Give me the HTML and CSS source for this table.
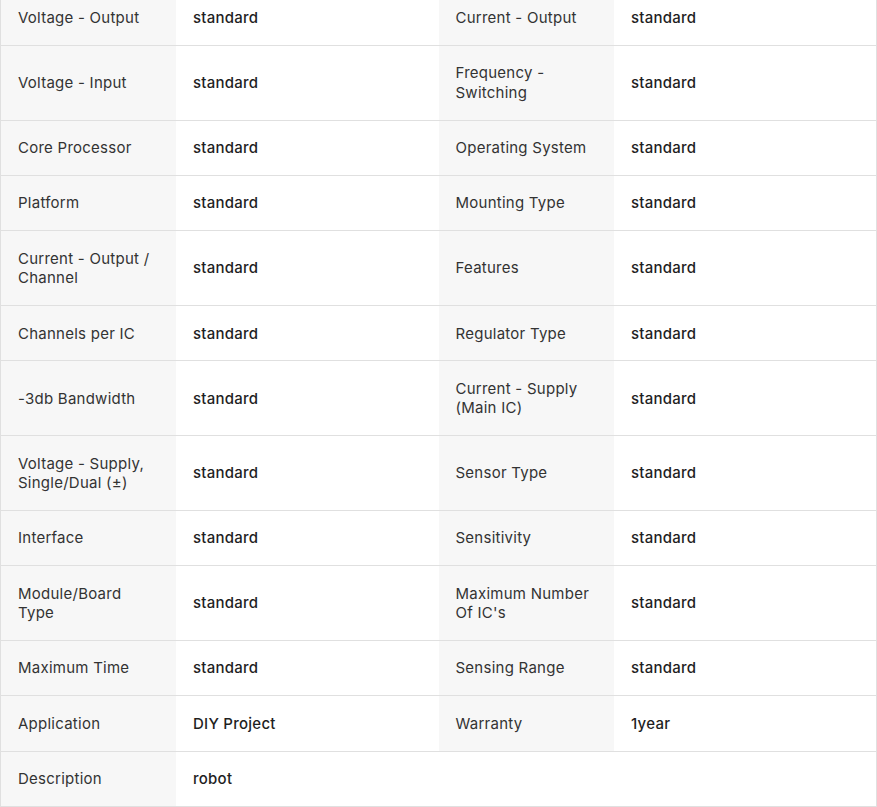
FILE: index.html
```html
<!DOCTYPE html>
<html>
<head>
<meta charset="utf-8">
<link rel="stylesheet" href="styles.css">
</head>
<body>
<div class="specs">
<table class="spec-table">
<colgroup><col class="c-label"><col class="c-value"><col class="c-label"><col class="c-value"></colgroup>
<tbody>
<tr><th>Voltage - Output</th><td>standard</td><th>Current - Output</th><td>standard</td></tr>
<tr><th>Voltage - Input</th><td>standard</td><th>Frequency - Switching</th><td>standard</td></tr>
<tr><th>Core Processor</th><td>standard</td><th>Operating System</th><td>standard</td></tr>
<tr><th>Platform</th><td>standard</td><th>Mounting Type</th><td>standard</td></tr>
<tr><th>Current - Output / Channel</th><td>standard</td><th>Features</th><td>standard</td></tr>
<tr><th>Channels per IC</th><td>standard</td><th>Regulator Type</th><td>standard</td></tr>
<tr><th>-3db Bandwidth</th><td>standard</td><th>Current - Supply (Main IC)</th><td>standard</td></tr>
<tr><th>Voltage - Supply, Single/Dual (±)</th><td>standard</td><th>Sensor Type</th><td>standard</td></tr>
<tr><th>Interface</th><td>standard</td><th>Sensitivity</th><td>standard</td></tr>
<tr><th>Module/Board Type</th><td>standard</td><th>Maximum Number Of IC's</th><td>standard</td></tr>
<tr><th>Maximum Time</th><td>standard</td><th>Sensing Range</th><td>standard</td></tr>
<tr><th>Application</th><td>DIY Project</td><th>Warranty</th><td>1year</td></tr>
<tr><th>Description</th><td colspan="3">robot</td></tr>
</tbody>
</table>
</div>
</body>
</html>
```
FILE: styles.css
```css
html, body {
  margin: 0;
  padding: 0;
  background: #fff;
}
body {
  font-family: Inter, "Noto Sans", sans-serif;
  font-size: 15px;
  line-height: 19.5px;
  letter-spacing: 0.25px;
  color: #333;
}
.specs {
  margin-top: -9.3px;
}
.spec-table {
  width: 877px;
  border-collapse: collapse;
  table-layout: fixed;
  border-left: 1px solid #e0e0e0;
  border-right: 1px solid #e0e0e0;
}
.c-label { width: 175px; }
.c-value { width: 263px; }
.spec-table th,
.spec-table td {
  padding: 17.4px 17px;
  text-align: left;
  vertical-align: middle;
  border-bottom: 1px solid #e0e0e0;
}
.spec-table th {
  background: #f7f7f7;
  font-weight: 400;
  color: #333;
}
.spec-table td {
  background: #fff;
  font-weight: 500;
  color: #1f1f1f;
  padding-left: 17.5px;
}
```
